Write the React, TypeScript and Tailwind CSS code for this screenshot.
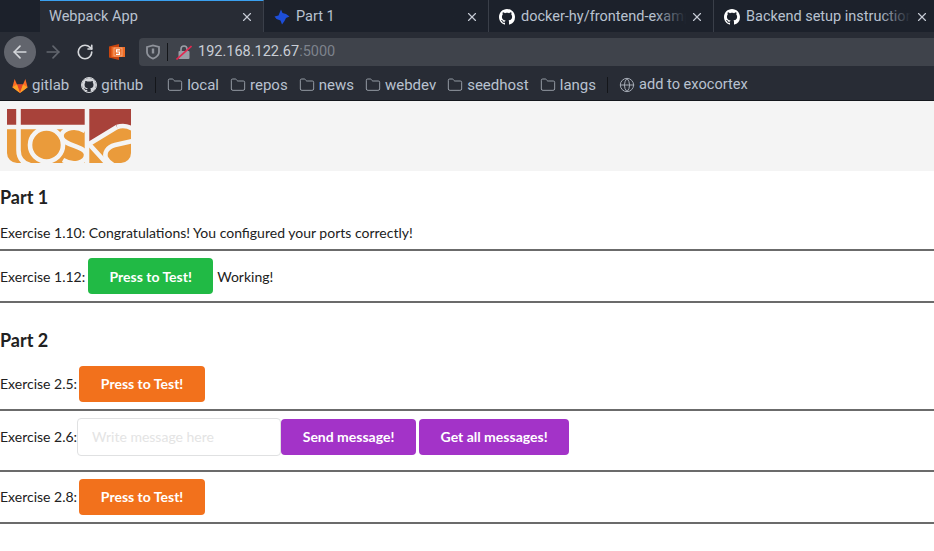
import React from 'react';
import { ArrowLeft, ArrowRight, RotateCw, Folder, Globe, X } from 'lucide-react';

const GithubIcon = ({ className = '' }: { className?: string }) => (
  <svg viewBox="0 0 16 16" className={className} fill="currentColor">
    <path d="M8 0C3.58 0 0 3.58 0 8c0 3.54 2.29 6.53 5.47 7.59.4.07.55-.17.55-.38 0-.19-.01-.82-.01-1.49-2.01.37-2.53-.49-2.69-.94-.09-.23-.48-.94-.82-1.13-.28-.15-.68-.52-.01-.53.63-.01 1.08.58 1.23.82.72 1.21 1.87.87 2.33.66.07-.52.28-.87.51-1.07-1.78-.2-3.64-.89-3.64-3.95 0-.87.31-1.59.82-2.15-.08-.2-.36-1.02.08-2.12 0 0 .67-.21 2.2.82.64-.18 1.32-.27 2-.27s1.36.09 2 .27c1.53-1.04 2.2-.82 2.2-.82.44 1.1.16 1.92.08 2.12.51.56.82 1.27.82 2.15 0 3.07-1.87 3.75-3.65 3.95.29.25.54.73.54 1.48 0 1.07-.01 1.93-.01 2.2 0 .21.15.46.55.38A8.01 8.01 0 0 0 16 8c0-4.42-3.58-8-8-8z" />
  </svg>
);

const GitlabIcon = () => (
  <svg viewBox="0 0 16 15" className="h-[15px] w-4">
    <path d="M8 15 0.4 9.2 2.6 1 5 6.6h6L13.4 1l2.2 8.2z" fill="#fc6d26" />
    <path d="M8 15 5 6.6h6z" fill="#e24329" />
    <path d="M8 15 0.4 9.2 5 6.6zM8 15l7.6-5.8L11 6.6z" fill="#fca326" />
  </svg>
);

const ShieldIcon = () => (
  <svg viewBox="0 0 16 16" className="h-4 w-4" fill="none" stroke="#8f939b" strokeWidth="1.8">
    <path d="M2 3 8 1.4 14 3v5c0 3.2-2.6 5.400-6 6.600C4.600 13.400 2 11.200 2 8z" />
    <path d="M8 4.500v5" strokeWidth="2.400" />
  </svg>
);

const BrokenLockIcon = () => (
  <svg viewBox="0 0 16 16" className="h-4 w-4">
    <path d="M5 7V5a3 3 0 0 1 6 0v2" fill="none" stroke="#9a9ea6" strokeWidth="1.600" />
    <rect x="2.500" y="7" width="11" height="8" rx="1" fill="#9a9ea6" />
    <path d="M0.500 15.500 15.500 2" stroke="#e22850" strokeWidth="1.600" />
  </svg>
);

const SlideIcon = () => (
  <svg viewBox="0 0 16 16" className="h-4 w-4">
    <path d="M0 2.500 10 0V16L0 13.500z" fill="#c8450f" />
    <rect x="2.500" y="3" width="13.500" height="10" fill="#ef6c24" />
    <rect x="5" y="4" width="8" height="8" fill="none" stroke="#f7c3a3" strokeWidth="0.700" />
    <path d="M11 5.800H7.500V8H10.500V10.300H7" fill="none" stroke="#fff" strokeWidth="1.200" />
  </svg>
);

const TabMark = () => (
  <svg viewBox="0 0 16 16" className="h-4 w-4" fill="#1d4ed8">
    <path d="M7 0.500 8.500 4 12 5 15.500 7.500 12 9 10.500 12 8 15.500 6.500 11.500 2.500 10 0.500 7.500 4.500 6.500z" />
  </svg>
);

const Logo = () => (
  <svg viewBox="0 0 124 54" className="h-[54px] w-[124px]">
    <path d="M0 18H124V44a10 10 0 0 1-10 10H10A10 10 0 0 1 0 44z" fill="#ea9b3b" />
    <path d="M0 0H124V19H110L83 36H80V19H0z" fill="#a8423a" />
    <g fill="none" stroke="#f4f4f4" strokeWidth="4.600">
      <path d="M11.500 0V41Q11.500 53 23 56" />
      <path d="M-2 18H78" />
      <circle cx="39.500" cy="36" r="16.500" />
      <path d="M78 22C66 15 52 21 55 29C58 37 78 37 79 45C80 54 66 57 56 51" />
      <path d="M80 0V56" />
      <path d="M110 18 82 35 102 57" />
      <path d="M110 18C116 16 121 17 126 20" />
      <path d="M126 32 108 36C100 38 97 44 99 49C101 53 104 55 108 57" />
    </g>
  </svg>
);

const Tab = ({ icon, title, width, active }: { icon?: React.ReactNode; title: string; width: string; active?: boolean }) => (
  <div
    className={`flex h-[32px] shrink-0 items-center border-r border-[#3a3f49] pr-[9px] ${width} ${
      active ? 'border-t border-t-[#3aa0ef] bg-[#282c35] pl-[9px]' : 'pl-[10px] pt-px'
    }`}
  >
    {icon && <span className="mr-[6px] shrink-0">{icon}</span>}
    <span className="relative min-w-0 flex-1 overflow-hidden whitespace-nowrap text-[14.5px] text-[#b9c2d0]">
      {title}
      {!active && <span className="absolute inset-y-0 right-0 w-8 bg-gradient-to-r from-transparent to-[#1c212b]" />}
    </span>
    <X className="ml-1 h-[14px] w-[14px] shrink-0 text-[#c5cad3]" strokeWidth={2} />
  </div>
);

const Bookmark = ({ icon, label }: { icon: React.ReactNode; label: string }) => (
  <div className="flex items-center gap-1">
    {icon}
    <span className="text-[15px] text-[#b9c2d0]">{label}</span>
  </div>
);

const folder = <Folder className="h-4 w-4 text-[#a5abb5]" strokeWidth={1.300} />;

const Browser = () => (
  <div className="font-['Roboto',sans-serif]">
    <div className="flex h-[32px] overflow-hidden bg-[#1c212b] pl-[40px]">
      <Tab title="Webpack App" width="w-[224px]" active />
      <Tab title="Part 1" width="w-[225px]" icon={<TabMark />} />
      <Tab title="docker-hy/frontend-example-docker" width="w-[225px]" icon={<span className="block text-white"><GithubIcon className="h-4 w-4" /></span>} />
      <Tab title="Backend setup instructions" width="w-[225px]" icon={<span className="block text-white"><GithubIcon className="h-4 w-4" /></span>} />
    </div>
    <div className="flex h-[38px] items-start bg-[#282c35] pl-1 pt-1">
      <div className="flex h-8 w-8 shrink-0 items-center justify-center rounded-full bg-[#62656d]">
        <ArrowLeft className="h-5 w-5 text-[#d5d7db]" strokeWidth={2} />
      </div>
      <ArrowRight className="ml-[7px] mt-[6px] h-5 w-5 text-[#62666e]" strokeWidth={2} />
      <RotateCw className="ml-[13px] mt-[7px] h-[18px] w-[18px] text-[#d5d7db]" strokeWidth={2.200} />
      <span className="ml-[15px] mt-2"><SlideIcon /></span>
      <div className="ml-[14px] mt-[2px] flex h-[28px] flex-1 items-center rounded-l bg-[#3f434b] pl-[6px]">
        <ShieldIcon />
        <div className="ml-[6px] h-[18px] w-px bg-[#14161a]" />
        <span className="ml-2"><BrokenLockIcon /></span>
        <span className="ml-[6px] text-[14.5px] text-[#c9ced6]">
          192.168.122.67<span className="text-[#7d828b]">:5000</span>
        </span>
      </div>
    </div>
    <div className="flex h-[30px] items-center gap-[11px] bg-[#282c35] pl-3">
      <Bookmark icon={<GitlabIcon />} label="gitlab" />
      <div className="ml-px flex items-center gap-1">
        <span className="block rounded-full border border-[#d5d7db] text-[#d5d7db]"><GithubIcon className="h-[14px] w-[14px]" /></span>
        <span className="text-[15px] text-[#b9c2d0]">github</span>
      </div>
      <div className="ml-px h-4 w-px bg-[#14161a]" />
      <Bookmark icon={folder} label="local" />
      <Bookmark icon={folder} label="repos" />
      <Bookmark icon={folder} label="news" />
      <Bookmark icon={folder} label="webdev" />
      <Bookmark icon={folder} label="seedhost" />
      <Bookmark icon={folder} label="langs" />
      <div className="h-4 w-px bg-[#14161a]" />
      <div className="flex items-center gap-1">
        <Globe className="h-4 w-4 text-[#a5abb5]" strokeWidth={1.500} />
        <span className="text-[14.6px] text-[#b9c2d0]">add to exocortex</span>
      </div>
    </div>
  </div>
);

const Btn = ({ color, width, children }: { color: string; width: string; children: React.ReactNode }) => (
  <button className={`h-9 rounded-[4px] text-center text-[14px] font-bold text-white ${color} ${width}`}>{children}</button>
);

const Rule = () => <hr className="h-0.5 border-0 bg-[#6b6b6b]" />;

const App = () => (
  <div className="h-[551px] w-[934px] overflow-hidden bg-white">
    <Browser />
    <div className="flex h-[71px] items-start border-t border-[#14171c] bg-[#f4f4f4] pl-[7px] pt-[8px]">
      <Logo />
    </div>
    <div className="font-['Lato',sans-serif] text-[14px] text-[#212121]">
      <h2 className="mt-[15px] text-[18px] font-bold leading-[22px]">Part 1</h2>
      <p className="mt-[16px] h-[17px] leading-[17px]">Exercise 1.10: Congratulations! You configured your ports correctly!</p>
      <div className="mt-[8px]"><Rule /></div>
      <div className="flex h-[50px] items-center">
        <span>Exercise 1.12:</span>
        <span className="ml-[3px]"><Btn color="bg-[#21ba45]" width="w-[125px]">Press to Test!</Btn></span>
        <span className="ml-1">Working!</span>
      </div>
      <Rule />
      <h2 className="mt-[26px] text-[18px] font-bold leading-[22px]">Part 2</h2>
      <div className="mt-[15px] flex h-[36px] items-center">
        <span className="pb-0.5">Exercise 2.5:</span>
        <span className="ml-[2px]"><Btn color="bg-[#f2711c] pb-0.5" width="w-[126px]">Press to Test!</Btn></span>
      </div>
      <div className="mt-[7px]"><Rule /></div>
      <div className="flex h-[59px] items-start pt-[7px]">
        <span className="leading-[38px]">Exercise 2.6:</span>
        <input
          className="h-[38px] w-[204px] rounded-[4px] border border-[#e0e1e2] bg-white px-[14px] pb-0.5 text-[14px] outline-none placeholder:text-[#e4e4e4]"
          placeholder="Write message here"
        />
        <span className="mt-px"><Btn color="bg-[#a333c8] pb-0.5" width="w-[135px]">Send message!</Btn></span>
        <span className="ml-[3px] mt-px"><Btn color="bg-[#a333c8] pb-0.5" width="w-[150px]">Get all messages!</Btn></span>
      </div>
      <Rule />
      <div className="mt-[7px] flex h-[36px] items-center">
        <span className="pb-0.5">Exercise 2.8:</span>
        <span className="ml-[2px]"><Btn color="bg-[#f2711c] pb-0.5" width="w-[126px]">Press to Test!</Btn></span>
      </div>
      <div className="mt-[7px]"><Rule /></div>
    </div>
  </div>
);

export default App;
